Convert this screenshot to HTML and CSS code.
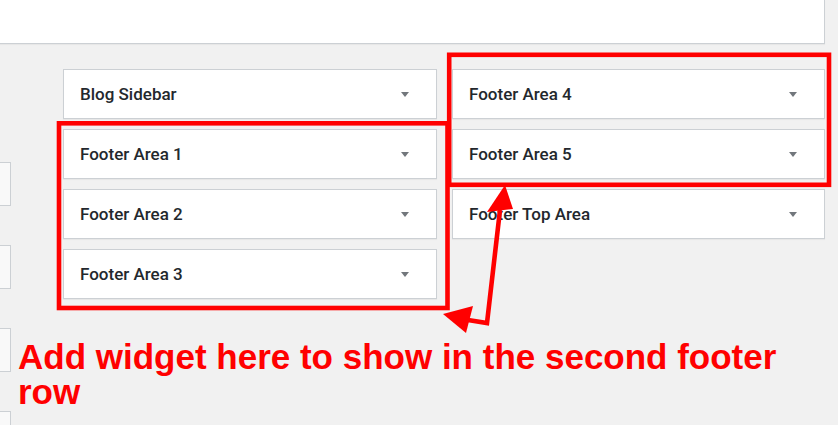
FILE: index.html
```html
<!DOCTYPE html>
<html lang="en">
<head>
  <meta charset="UTF-8">
  <title>Widgets</title>
  <link rel="stylesheet" href="styles.css">
</head>
<body>
  <div class="top-panel"></div>
  <div class="main">
    <div class="stubs">
      <div class="stub"></div>
      <div class="stub"></div>
      <div class="stub"></div>
      <div class="stub"></div>
    </div>
    <div class="sidebars">
      <div class="column">
        <div class="widget"><span>Blog Sidebar</span><i class="caret"></i></div>
        <div class="widget"><span>Footer Area 1</span><i class="caret"></i></div>
        <div class="widget"><span>Footer Area 2</span><i class="caret"></i></div>
        <div class="widget"><span>Footer Area 3</span><i class="caret"></i></div>
      </div>
      <div class="column">
        <div class="widget"><span>Footer Area 4</span><i class="caret"></i></div>
        <div class="widget"><span>Footer Area 5</span><i class="caret"></i></div>
        <div class="widget"><span>Footer Top Area</span><i class="caret"></i></div>
      </div>
    </div>
  </div>

  <svg class="marks" width="838" height="425" viewBox="0 0 838 425">
    <rect x="449.2" y="54.8" width="379.8" height="130" fill="none" stroke="#ff0000" stroke-width="4.6"/>
    <rect x="59" y="123.3" width="388.5" height="184.7" fill="none" stroke="#ff0000" stroke-width="4.6"/>
    <polyline points="500,210 487,323 468,320" fill="none" stroke="#ff0000" stroke-width="4.6" stroke-linejoin="miter"/>
    <polygon points="505,185 487,212 513,209" fill="#ff0000"/>
    <polygon points="443,314 473,306 466,333" fill="#ff0000"/>
  </svg>

  <p class="note">Add widget here to show in the second footer row</p>
</body>
</html>
```

FILE: styles.css
```css
body { margin: 0; height: 425px; overflow: hidden; position: relative; background: #f1f1f1; font-family: Roboto, "Liberation Sans", sans-serif; }

.top-panel { width: 825px; height: 44px; box-sizing: border-box; background: #fff; border-right: 1px solid #ccd0d4; border-bottom: 1px solid #ccd0d4; box-shadow: 0 1px 1px rgba(0,0,0,.04); }

.main { display: flex; align-items: flex-start; height: 381px; overflow: hidden; }

.stubs { display: flex; flex-direction: column; gap: 39px; padding-top: 118px; }
.stub { width: 11px; height: 44px; box-sizing: border-box; background: #f9f9f9; border: 1px solid #ccd0d4; border-left: none; }

.sidebars { display: grid; grid-template-columns: 374px 373px; column-gap: 15px; margin-left: 52px; padding-top: 25px; }
.column { display: flex; flex-direction: column; gap: 10px; }

.widget { height: 50px; box-sizing: border-box; display: flex; align-items: center; justify-content: space-between; padding: 0 27px 0 16px; background: #fff; border: 1px solid #ccd0d4; box-shadow: 0 1px 1px rgba(0,0,0,.04); color: #23282d; font-size: 17px; font-weight: 500; }
.caret { width: 0; height: 0; border-left: 4px solid transparent; border-right: 4px solid transparent; border-top: 5px solid #72777c; }

.marks { position: absolute; left: 0; top: 0; }

.note { position: absolute; left: 18px; top: 339px; width: 800px; margin: 0; color: #ff0000; font-family: "Liberation Sans", Arial, sans-serif; font-weight: 700; font-size: 35px; line-height: 35px; }
```
